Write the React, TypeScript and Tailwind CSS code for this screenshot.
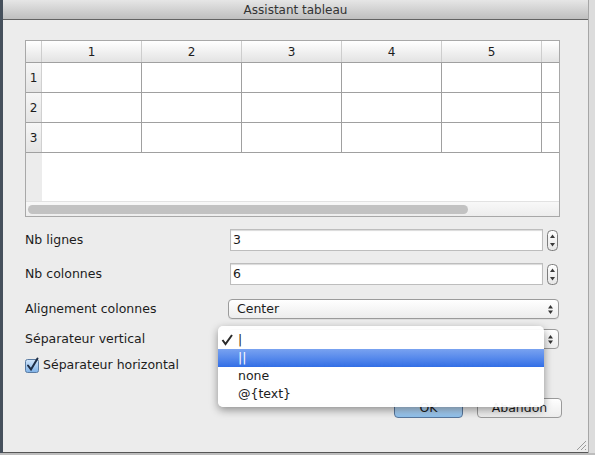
import React from "react";

const font = "font-['DejaVu_Sans',sans-serif]";

const cols = ["1", "2", "3", "4", "5"];
const rows = ["1", "2", "3"];

const Stepper = () => (
  <svg width="11" height="21" viewBox="0 0 11 21" className="ml-[4px]">
    <defs>
      <linearGradient id="stp" x1="0" y1="0" x2="0" y2="1">
        <stop offset="0" stopColor="#ffffff" />
        <stop offset="1" stopColor="#e6e6e6" />
      </linearGradient>
    </defs>
    <rect x="0.5" y="0.5" width="10" height="20" rx="4" fill="url(#stp)" stroke="#7d7d7d" />
    <path d="M3 8 L5.5 4.5 L8 8 Z" fill="#3a3a3a" />
    <path d="M3 13 L5.5 16.5 L8 13 Z" fill="#3a3a3a" />
  </svg>
);

const SelectArrows = () => (
  <svg width="7" height="11" viewBox="0 0 7 11">
    <path d="M1 4.5 L3.5 1 L6 4.5 Z" fill="#333" />
    <path d="M1 6.5 L3.5 10 L6 6.5 Z" fill="#333" />
  </svg>
);

const CheckBox = ({ checked }: { checked: boolean }) => (
  <svg width="15" height="16" viewBox="0 0 15 16">
    <defs>
      <linearGradient id={checked ? "cbOn" : "cbOff"} x1="0" y1="0" x2="0" y2="1">
        <stop offset="0" stopColor={checked ? "#d3e6fa" : "#ffffff"} />
        <stop offset="1" stopColor={checked ? "#7fb2e8" : "#e8e8e8"} />
      </linearGradient>
    </defs>
    <rect
      x="0.5"
      y="2.5"
      width="13"
      height="13"
      rx="2"
      fill={checked ? "url(#cbOn)" : "url(#cbOff)"}
      stroke={checked ? "#5b7ca3" : "#8a8a8a"}
    />
    {checked && (
      <path d="M3 8.5 L6 12.5 L12.5 1.5" fill="none" stroke="#1d2d45" strokeWidth="2" strokeLinecap="round" />
    )}
  </svg>
);

export default function App() {
  return (
    <div className={`relative w-[595px] h-[455px] bg-[#bdbdbd] ${font} text-[#1c1c1c]`}>
      <div className="flex h-[453px]">
        <div className="w-[3px] bg-[#46505c]" />
        <div className="w-[585px] flex flex-col bg-[#ececec] border-b border-[#565656]">
          {/* title bar */}
          <div className="h-[20px] shrink-0 flex items-center justify-center bg-gradient-to-b from-[#e6e6e6] to-[#bfbfbf] border-b border-[#636363] text-[12px] text-[#333]">
            Assistant tableau
          </div>

          <div className="flex flex-col pl-[22px] pr-[26px]">
            {/* table */}
            <div className="mt-[20px] w-[535px] h-[177px] border border-[#a8a8a8] flex flex-col bg-white">
              <div className="h-[22px] flex border-b border-[#a0a0a0] bg-gradient-to-b from-white to-[#e3e3e3] text-[12px]">
                <div className="w-[16px] border-r border-[#cdcdcd]" />
                {cols.map((c) => (
                  <div key={c} className="w-[100px] flex items-center justify-center border-r border-[#cdcdcd]">
                    {c}
                  </div>
                ))}
                <div className="flex-1" />
              </div>
              {rows.map((r) => (
                <div key={r} className="h-[30px] flex border-b border-[#a0a0a0] text-[12px]">
                  <div className="w-[16px] flex items-center justify-center bg-gradient-to-b from-[#f6f6f6] to-[#e4e4e4] border-r border-[#d0d0d0]">
                    {r}
                  </div>
                  {cols.map((c) => (
                    <div key={c} className="w-[100px] border-r border-[#a0a0a0]" />
                  ))}
                  <div className="flex-1" />
                </div>
              ))}
              <div className="flex-1 flex">
                <div className="w-[16px] bg-[#ececec]" />
                <div className="flex-1 bg-white" />
              </div>
              <div className="h-[15px] flex items-center border-t border-[#e2e2e2] bg-gradient-to-b from-[#f8f8f8] to-[#ededed]">
                <div className="ml-[2px] w-[440px] h-[9px] rounded-full bg-[#c2c2c2]" />
              </div>
            </div>

            {/* form */}
            <div className="mt-[12px] h-[22px] flex items-center text-[12.5px]">
              <div className="w-[205px]">Nb lignes</div>
              <div className="w-[313px] h-[22px] bg-white border border-[#bdbdbd] shadow-[inset_0_1px_1px_rgba(0,0,0,0.15)] flex items-center pl-[2px]">
                3
              </div>
              <Stepper />
            </div>
            <div className="mt-[12px] h-[22px] flex items-center text-[12.5px]">
              <div className="w-[205px]">Nb colonnes</div>
              <div className="w-[313px] h-[22px] bg-white border border-[#bdbdbd] shadow-[inset_0_1px_1px_rgba(0,0,0,0.15)] flex items-center pl-[2px]">
                6
              </div>
              <Stepper />
            </div>
            <div className="mt-[14px] h-[20px] flex items-center text-[12.5px]">
              <div className="w-[203px]">Alignement colonnes</div>
              <div className="w-[331px] h-[20px] rounded-[4px] border border-[#9b9b9b] bg-gradient-to-b from-white to-[#ededed] shadow-[0_1px_0_rgba(0,0,0,0.06)] flex items-center justify-between pl-[8px] pr-[4px]">
                <span>Center</span>
                <SelectArrows />
              </div>
            </div>
            <div className="mt-[10px] h-[20px] flex items-center text-[12.5px]">
              <div className="w-[203px]">Séparateur vertical</div>
              <div className="w-[331px] h-[20px] rounded-[4px] border border-[#9b9b9b] bg-gradient-to-b from-white to-[#ededed] flex items-center justify-between pl-[8px] pr-[4px]">
                <span>|</span>
                <SelectArrows />
              </div>
            </div>
            <div className="mt-[8px] h-[16px] flex items-center text-[12.5px]">
              <div className="w-[203px] flex items-center gap-[3px]">
                <CheckBox checked />
                <span>Séparateur horizontal</span>
              </div>
              <div className="flex items-center gap-[3px]">
                <CheckBox checked={false} />
                <span>Ajouter une marge avec la ligne horizontale</span>
              </div>
            </div>

            {/* buttons */}
            <div className="mt-[25px] flex justify-end gap-[14px] pr-[0px] text-[12.5px]">
              <div className="w-[69px] h-[20px] rounded-[4px] border border-[#58779c] bg-gradient-to-b from-[#d9ebfb] to-[#8ec0ec] flex items-center justify-center">
                OK
              </div>
              <div className="w-[85px] h-[20px] rounded-[4px] border border-[#9a9a9a] bg-gradient-to-b from-white to-[#ececec] flex items-center justify-center">
                Abandon
              </div>
            </div>
          </div>

          <div className="flex-1 flex items-end justify-end pr-[1px] pb-[1px]">
            <svg width="11" height="11" viewBox="0 0 11 11">
              <path d="M10 1 L1 10 M10 5 L5 10 M10 9 L9 10" stroke="#9a9a9a" strokeWidth="1" />
            </svg>
          </div>
        </div>
        <div className="flex-1 bg-[#dcdcdc] border-l border-[#a6a6a6]" />
      </div>

      {/* open popup menu */}
      <div className="absolute left-[218px] top-[326px] w-[326px] h-[81px] rounded-[5px] bg-white/95 shadow-[0_3px_9px_rgba(0,0,0,0.4)] pt-[5px] text-[12.5px]">
        <div className="h-[18px] flex items-center bg-white">
          <svg width="20" height="18" viewBox="0 0 20 18" className="shrink-0">
            <path d="M4.5 9 L7.5 13 L14 4" fill="none" stroke="#2a2a2a" strokeWidth="2" />
          </svg>
          <span>|</span>
        </div>
        <div className="h-[18px] flex items-center pl-[20px] bg-gradient-to-b from-[#6a98ef]/90 to-[#1a5ee3]/90 text-white">
          ||
        </div>
        <div className="h-[18px] flex items-center pl-[20px] bg-white">none</div>
        <div className="h-[18px] flex items-center pl-[20px] bg-white">@{"{text}"}</div>
      </div>
    </div>
  );
}
